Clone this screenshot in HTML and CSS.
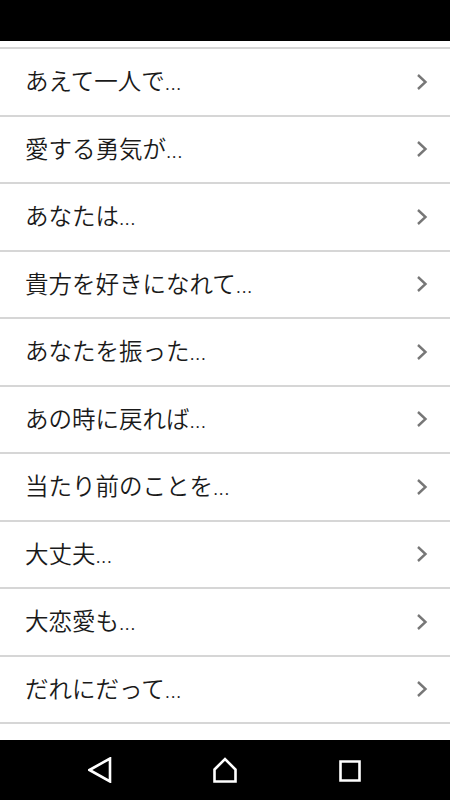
FILE: index.html
```html
<!DOCTYPE html>
<html lang="ja">
<head>
	<meta charset="UTF-8">
	<title>一覧</title>
	<link rel="stylesheet" href="styles.css">
</head>
<body>
	<div class="screen">
		<div class="status-bar"></div>
		<div class="content">
			<ul class="list">
				<li class="row"><span class="label">あえて一人で...</span><svg class="chevron" viewBox="0 0 12 18"><path d="M2 2 L9.5 9 L2 16"/></svg></li>
				<li class="row"><span class="label">愛する勇気が...</span><svg class="chevron" viewBox="0 0 12 18"><path d="M2 2 L9.5 9 L2 16"/></svg></li>
				<li class="row"><span class="label">あなたは...</span><svg class="chevron" viewBox="0 0 12 18"><path d="M2 2 L9.5 9 L2 16"/></svg></li>
				<li class="row"><span class="label">貴方を好きになれて...</span><svg class="chevron" viewBox="0 0 12 18"><path d="M2 2 L9.5 9 L2 16"/></svg></li>
				<li class="row"><span class="label">あなたを振った...</span><svg class="chevron" viewBox="0 0 12 18"><path d="M2 2 L9.5 9 L2 16"/></svg></li>
				<li class="row"><span class="label">あの時に戻れば...</span><svg class="chevron" viewBox="0 0 12 18"><path d="M2 2 L9.5 9 L2 16"/></svg></li>
				<li class="row"><span class="label">当たり前のことを...</span><svg class="chevron" viewBox="0 0 12 18"><path d="M2 2 L9.5 9 L2 16"/></svg></li>
				<li class="row"><span class="label">大丈夫...</span><svg class="chevron" viewBox="0 0 12 18"><path d="M2 2 L9.5 9 L2 16"/></svg></li>
				<li class="row"><span class="label">大恋愛も...</span><svg class="chevron" viewBox="0 0 12 18"><path d="M2 2 L9.5 9 L2 16"/></svg></li>
				<li class="row"><span class="label">だれにだって...</span><svg class="chevron" viewBox="0 0 12 18"><path d="M2 2 L9.5 9 L2 16"/></svg></li>
				<li class="row"></li>
			</ul>
		</div>
		<div class="nav-bar">
			<svg class="nav-icon" viewBox="0 0 24 26"><path d="M22 1.5 L22 24.5 L1.5 13 Z"/></svg>
			<svg class="nav-icon" viewBox="0 0 24 26"><path d="M1.5 12.5 L12 2 L22.5 12.5 L22.5 24.5 L1.5 24.5 Z"/></svg>
			<svg class="nav-icon" viewBox="0 0 24 26"><path d="M2.5 4.5 H21.5 V23.5 H2.5 Z"/></svg>
		</div>
	</div>
</body>
</html>
```

FILE: styles.css
```css
html, body {
	margin: 0;
	padding: 0;
	background: #fff;
}
.screen {
	width: 450px;
	height: 800px;
	display: flex;
	flex-direction: column;
	overflow: hidden;
	font-family: Roboto, "Noto Sans CJK JP", sans-serif;
}
.status-bar {
	height: 41px;
	flex-shrink: 0;
	background: #000;
}
.content {
	flex: 1;
	overflow: hidden;
	padding-top: 6px;
}
.list {
	list-style: none;
	margin: 0;
	padding: 0;
	border-top: 2px solid #d6d6d6;
}
.row {
	height: 65.5px;
	border-bottom: 2px solid #d6d6d6;
	display: flex;
	align-items: center;
	justify-content: space-between;
	padding: 0 22px 0 25px;
	box-sizing: content-box;
}
.label {
	font-size: 23.5px;
	font-weight: 350;
	color: #1a1a1a;
	margin-top: -3px;
}
.chevron {
	width: 12px;
	height: 18px;
	fill: none;
	stroke: #777;
	stroke-width: 2.4;
}
.nav-bar {
	height: 60px;
	flex-shrink: 0;
	background: #000;
	display: flex;
	justify-content: center;
	align-items: center;
	gap: 101px;
}
.nav-icon {
	width: 24px;
	height: 26px;
	fill: none;
	stroke: #fff;
	stroke-width: 2.6;
	stroke-linejoin: miter;
}
```
